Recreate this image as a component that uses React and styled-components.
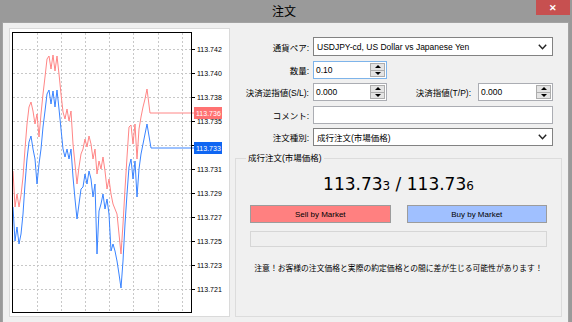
import React from "react";
import styled, { createGlobalStyle } from "styled-components";

const RED = [
  [13, 172], [15, 208], [17, 195], [19, 208], [21, 196], [23, 178], [25, 150], [27, 125],
  [29, 108], [31, 103], [33, 112], [35, 125], [37, 115], [39, 138], [41, 115], [43, 95],
  [45, 78], [47, 60], [49, 57], [51, 70], [53, 56], [55, 72], [57, 57], [59, 75],
  [61, 95], [63, 113], [65, 120], [67, 110], [69, 122], [71, 112], [73, 145], [75, 165],
  [77, 185], [79, 168], [81, 155], [83, 150], [85, 140], [87, 148], [89, 137], [91, 145],
  [93, 160], [95, 150], [97, 175], [99, 162], [101, 170], [103, 158], [105, 172], [107, 190],
  [109, 180], [111, 195], [113, 205], [115, 210], [117, 215], [119, 235], [121, 255], [123, 225],
  [125, 190], [127, 158], [129, 128], [131, 126], [133, 145], [135, 125], [137, 160], [139, 130],
  [141, 118], [143, 108], [145, 100], [147, 90], [150, 114], [194, 114],
];

const BLUE = [
  [13, 208], [15, 242], [17, 228], [19, 245], [21, 235], [23, 215], [25, 185], [27, 160],
  [29, 143], [31, 137], [33, 150], [35, 160], [37, 185], [39, 165], [41, 150], [43, 128],
  [45, 112], [47, 95], [49, 91], [51, 105], [53, 92], [55, 108], [57, 91], [59, 110],
  [61, 130], [63, 150], [65, 158], [67, 150], [69, 160], [71, 150], [73, 178], [75, 200],
  [77, 220], [79, 205], [81, 190], [83, 188], [85, 175], [87, 185], [89, 172], [91, 180],
  [93, 198], [95, 185], [97, 255], [99, 212], [101, 205], [103, 195], [105, 210], [107, 200],
  [109, 215], [111, 252], [113, 245], [115, 252], [117, 262], [119, 275], [121, 289], [123, 262],
  [125, 225], [127, 195], [129, 168], [131, 160], [133, 180], [135, 162], [137, 198], [139, 170],
  [141, 155], [143, 145], [145, 135], [147, 125], [151, 149], [194, 149],
];

// y position, label (null = hidden behind a price tag)
const TICKS = [
  [50, "113.742"], [74, "113.740"], [98, "113.738"], [122, "113.735"], [146, null],
  [170, "113.731"], [194, "113.729"], [218, "113.727"], [242, "113.725"], [266, "113.723"],
  [290, "113.721"],
];

const GRID_X = [37, 61, 85, 109, 133, 158, 182];

const toPath = (pts) => pts.map(([x, y], i) => `${i ? "L" : "M"}${x},${y}`).join(" ");

const GlobalStyle = createGlobalStyle`
  html, body {
    margin: 0;
    padding: 0;
    background: #9a9a9a;
  }
  body {
    width: 572px;
    height: 322px;
    overflow: hidden;
    font-family: "Liberation Sans", "Noto Sans CJK JP", sans-serif;
    color: #000;
  }
`;

const Window = styled.div`
  width: 572px;
  height: 322px;
  display: flex;
  flex-direction: column;
  background: #9a9a9a;
`;

const TitleBar = styled.div`
  position: relative;
  height: 22px;
  display: flex;
  align-items: center;
  justify-content: center;
`;

const Title = styled.span`
  font-family: "Noto Sans CJK JP", sans-serif;
  font-size: 12px;
  line-height: 22px;
  margin-left: -4px;
`;

const CloseButton = styled.div`
  position: absolute;
  top: 0;
  right: 2px;
  width: 34px;
  height: 15px;
  background: #c75050;
  color: #fff;
  font-size: 9px;
  font-weight: bold;
  display: flex;
  align-items: center;
  justify-content: center;
`;

const Client = styled.div`
  flex: 1;
  margin: 0 3px 0 2px;
  border: 1px solid #a3a3a3;
  border-bottom: none;
  background: #f0f0f0;
  display: flex;
  gap: 3px;
  padding: 5px 6px 0 6px;
`;

const ChartPanel = styled.div`
  width: 219px;
  height: 287px;
  border: 1px solid #dadada;
  background: #fff;
  flex-shrink: 0;

  svg {
    display: block;
  }
`;

const RightColumn = styled.div`
  flex: 1;
  display: flex;
  flex-direction: column;
`;

const Form = styled.div`
  display: flex;
  flex-direction: column;
  padding: 9px 9px 0 0;
`;

const Row = styled.div`
  display: flex;
  align-items: stretch;
  height: ${({ $h }) => $h}px;
  margin-top: ${({ $mt }) => $mt || 0}px;
`;

const Label = styled.label`
  width: ${({ $w }) => ($w ? `${$w}px` : "auto")};
  flex: ${({ $grow }) => ($grow ? 1 : "none")};
  padding-right: ${({ $pr }) => $pr || 4}px;
  text-align: right;
  font-size: 8.5px;
  white-space: nowrap;
  display: flex;
  align-items: center;
  justify-content: flex-end;
`;

const Select = styled.div`
  flex: 1;
  box-sizing: border-box;
  border: 1px solid #828282;
  background: #fff;
  display: flex;
  align-items: center;
  padding: 0 5px 0 3px;
  font-size: 8.5px;
  white-space: nowrap;
`;

const SelectText = styled.span`
  flex: 1;
`;

const TextBox = styled.div`
  width: ${({ $w }) => ($w ? `${$w}px` : "auto")};
  flex: ${({ $w }) => ($w ? "none" : 1)};
  box-sizing: border-box;
  border: 1px solid ${({ $focused }) => ($focused ? "#7eb4ea" : "#abadb3")};
  background: #fff;
  display: flex;
  align-items: stretch;
  font-size: 8.5px;
`;

const Value = styled.span`
  flex: 1;
  display: flex;
  align-items: center;
  padding-left: 2px;
`;

const Spinner = styled.div`
  width: 15px;
  margin: 1px 1px 1px 0;
  display: flex;
  flex-direction: column;
`;

const SpinButton = styled.div`
  flex: 1;
  background: #e4e4e4;
  border: 1px solid #adadad;
  display: flex;
  align-items: center;
  justify-content: center;

  & + & {
    border-top: none;
  }

  &::after {
    content: "";
    width: 0;
    height: 0;
    border-left: 3px solid transparent;
    border-right: 3px solid transparent;
    ${({ $down }) =>
      $down ? "border-top: 3px solid #000;" : "border-bottom: 3px solid #000;"}
  }
`;

const Group = styled.fieldset`
  flex: 1;
  margin: 7px 0 5px 2px;
  padding: 11px 14px 0 14px;
  border: 1px solid #dcdcdc;
  display: flex;
  flex-direction: column;
  min-width: 0;
`;

const Legend = styled.legend`
  font-size: 8.5px;
  line-height: 10px;
  padding: 0 2px;
  margin-left: -4px;
`;

const PriceLine = styled.div`
  height: 20px;
  line-height: 20px;
  text-align: center;
  font-family: "DejaVu Sans", sans-serif;
  font-size: 17px;
  white-space: nowrap;
`;

const Pip = styled.span`
  font-size: 12px;
`;

const ButtonRow = styled.div`
  display: flex;
  gap: 16px;
  margin-top: 11px;
`;

const MarketButton = styled.button`
  flex: 1;
  height: 18px;
  padding: 0;
  border: 1px solid #9c9c9c;
  background: ${({ $side }) => ($side === "sell" ? "#ff8080" : "#a0c0ff")};
  font-family: "Liberation Sans", sans-serif;
  font-size: 8px;
  color: #000;
`;

const Progress = styled.div`
  height: 16px;
  margin-top: 8px;
  box-sizing: border-box;
  border: 1px solid #d6d6d6;
  background: #efefef;
`;

const Warning = styled.p`
  margin: 15px 0 0;
  text-align: center;
  font-family: "Noto Sans CJK JP", sans-serif;
  font-size: 7.8px;
  line-height: 12px;
  white-space: nowrap;
`;

const Chevron = () => (
  <svg width="9" height="6" viewBox="0 0 9 6">
    <polyline points="0.8,0.8 4.5,4.8 8.2,0.8" fill="none" stroke="#222" strokeWidth="1.4" />
  </svg>
);

const PriceChart = () => (
  <svg width="219" height="287" viewBox="10 30 219 287">
    <g stroke="#c8c8c8" strokeWidth="1" strokeDasharray="2,2">
      {TICKS.map(([y]) => (
        <line key={y} x1="13" x2="191" y1={y + 0.5} y2={y + 0.5} />
      ))}
      {GRID_X.map((x) => (
        <line key={x} x1={x + 0.5} x2={x + 0.5} y1="34" y2="313" />
      ))}
    </g>
    <path d={toPath(RED)} fill="none" stroke="#ff8686" strokeWidth="1" />
    <path d={toPath(BLUE)} fill="none" stroke="#3a84ff" strokeWidth="1" />
    <rect x="12.5" y="33.5" width="179" height="280" fill="none" stroke="#000" strokeWidth="1" />
    <g fontFamily="Liberation Sans, sans-serif" fontSize="7" fill="#000">
      {TICKS.map(([y, t]) => (
        <g key={y}>
          <line x1="192" x2="195" y1={y + 0.5} y2={y + 0.5} stroke="#000" />
          {t && <text x="197" y={y + 2.5}>{t}</text>}
        </g>
      ))}
    </g>
    <rect x="194" y="108" width="28" height="12" fill="#ff7272" />
    <text x="196" y="116.5" fontFamily="Liberation Sans, sans-serif" fontSize="7" fill="#fff">
      113.736
    </text>
    <rect x="194" y="143" width="28" height="12" fill="#0f66f2" />
    <text x="196" y="151.5" fontFamily="Liberation Sans, sans-serif" fontSize="7" fill="#fff">
      113.733
    </text>
  </svg>
);

const NumberField = ({ value, width, focused }) => (
  <TextBox $w={width} $focused={focused}>
    <Value>{value}</Value>
    <Spinner>
      <SpinButton />
      <SpinButton $down />
    </Spinner>
  </TextBox>
);

export default function App() {
  return (
    <>
      <GlobalStyle />
      <Window>
        <TitleBar>
          <Title>注文</Title>
          <CloseButton>✕</CloseButton>
        </TitleBar>
        <Client>
          <ChartPanel>
            <PriceChart />
          </ChartPanel>
          <RightColumn>
            <Form>
              <Row $h={19}>
                <Label $w={76}>通貨ペア:</Label>
                <Select>
                  <SelectText>USDJPY-cd, US Dollar vs Japanese Yen</SelectText>
                  <Chevron />
                </Select>
              </Row>
              <Row $h={18} $mt={5}>
                <Label $w={76}>数量:</Label>
                <NumberField value="0.10" width={74} focused />
              </Row>
              <Row $h={18} $mt={4}>
                <Label $w={76}>決済逆指値(S/L):</Label>
                <NumberField value="0.000" width={74} />
                <Label $grow $pr={7}>決済指値(T/P):</Label>
                <NumberField value="0.000" width={75} />
              </Row>
              <Row $h={18} $mt={5}>
                <Label $w={76}>コメント:</Label>
                <TextBox />
              </Row>
              <Row $h={18} $mt={4}>
                <Label $w={76}>注文種別:</Label>
                <Select>
                  <SelectText>成行注文(市場価格)</SelectText>
                  <Chevron />
                </Select>
              </Row>
            </Form>
            <Group>
              <Legend>成行注文(市場価格)</Legend>
              <PriceLine>
                113.73<Pip>3</Pip> / 113.73<Pip>6</Pip>
              </PriceLine>
              <ButtonRow>
                <MarketButton $side="sell">Sell by Market</MarketButton>
                <MarketButton $side="buy">Buy by Market</MarketButton>
              </ButtonRow>
              <Progress />
              <Warning>注意！お客様の注文価格と実際の約定価格との間に差が生じる可能性があります！</Warning>
            </Group>
          </RightColumn>
        </Client>
      </Window>
    </>
  );
}
